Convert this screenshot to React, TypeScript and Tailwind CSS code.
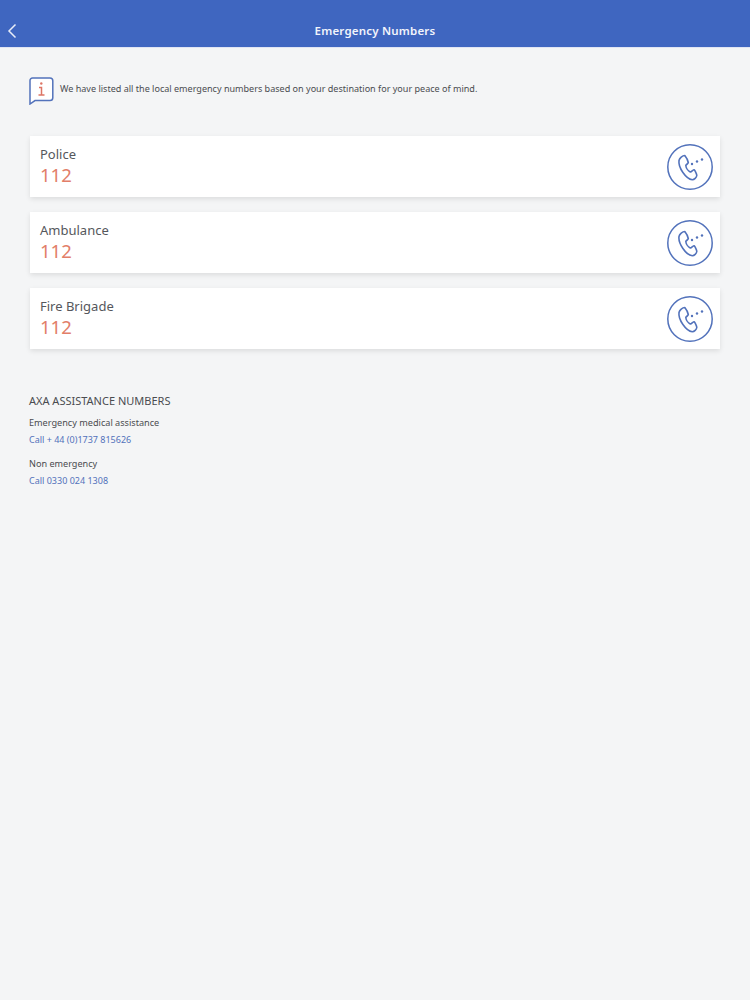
const numbers = ['Police', 'Ambulance', 'Fire Brigade'];

function PhoneIcon() {
  return (
    <svg width="46" height="46" viewBox="0 0 46 46" fill="none" stroke="#5272bb">
      <circle cx="23" cy="23" r="22.2" strokeWidth="1.5" />
      <path
        d="M12 16.500C12.500 14 15.500 11.500 17.800 11.500C19 13 21 17 21.300 18.500C21 20 19.300 20.300 18.800 21.500C19 24 21.300 27 23.300 28C24.800 27.700 25.500 26 27 25.700C28 26.500 29.800 30 29.800 31.500C29.500 33.500 27.300 35.700 25.300 35.700C19 35 11 23.500 12 16.500Z"
        strokeWidth="1.6"
        strokeLinejoin="round"
      />
      <g fill="#5272bb" stroke="none">
        <circle cx="25" cy="20" r="1.200" />
        <circle cx="30" cy="17.500" r="1.200" />
        <circle cx="35" cy="15.500" r="1.200" />
      </g>
    </svg>
  );
}

export default function App() {
  return (
    <div className="min-h-[1000px] bg-[#f4f5f6] font-['Noto_Sans',sans-serif]">
      <header className="flex h-12 items-center bg-[#3f66c0] pt-[14px] border-b border-[#dfe4f3]">
        <svg className="ml-[7px]" width="10" height="16" viewBox="0 0 10 16" fill="none" stroke="#e8edf8" strokeWidth="1.5">
          <path d="M8.500 1.500 L2 8 L8.500 14.500" />
        </svg>
        <h1 className="flex-1 pr-[17px] text-center text-[11.500px] font-semibold tracking-[0.2px] text-[#f2f4fb]">Emergency Numbers</h1>
      </header>

      <div className="px-[30px]">
        <div className="flex items-start pt-[29px]">
          <svg className="ml-[-1px] shrink-0" width="25" height="28" viewBox="0 0 25 28" fill="none">
            <path d="M3.500 1h17.500a2.800 2.800 0 0 1 2.800 2.800v17a2.800 2.800 0 0 1-2.800 2.800H6L1 27V3.500A2.500 2.500 0 0 1 3.500 1z" fill="#ffffff" stroke="#5272bb" strokeWidth="1.5" />
            <path d="M10 10.500h2.500v7.500M9.500 18h6" stroke="#dd7565" strokeWidth="1.500" />
            <circle cx="12.300" cy="6.500" r="1.200" fill="#dd7565" />
          </svg>
          <p className="ml-[6px] mt-[5px] text-[9.050px] leading-[13px] text-[#4a4c50]">
            We have listed all the local emergency numbers based on your destination for your peace of mind.
          </p>
        </div>

        <div className="mt-[31px] flex flex-col gap-[15px]">
          {numbers.map((name) => (
            <div key={name} className="flex h-[61px] items-center justify-between bg-white pl-[10px] pr-[7px] shadow-[0_2px_5px_rgba(0,0,0,0.1)]">
              <div className="pb-[2px]">
                <div className="text-[13px] leading-[18px] text-[#55575c]">{name}</div>
                <div className="text-[18.500px] leading-[24px] text-[#e27e69]">112</div>
              </div>
              <PhoneIcon />
            </div>
          ))}
        </div>

        <div className="ml-[-1px] mt-[45px] text-[11px] leading-[14px] text-[#4a4c50]">AXA ASSISTANCE NUMBERS</div>
        <div className="ml-[-1px] mt-[8px] text-[9.150px] leading-[13px] text-[#4a4c50]">Emergency medical assistance</div>
        <div className="ml-[-1px] mt-[4px] text-[9px] leading-[13px] text-[#5272bb]">Call + 44 (0)1737 815626</div>
        <div className="ml-[-1px] mt-[11px] text-[9.100px] leading-[13px] text-[#4a4c50]">Non emergency</div>
        <div className="ml-[-1px] mt-[4px] text-[9px] leading-[13px] text-[#5272bb]">Call 0330 024 1308</div>
      </div>
    </div>
  );
}
